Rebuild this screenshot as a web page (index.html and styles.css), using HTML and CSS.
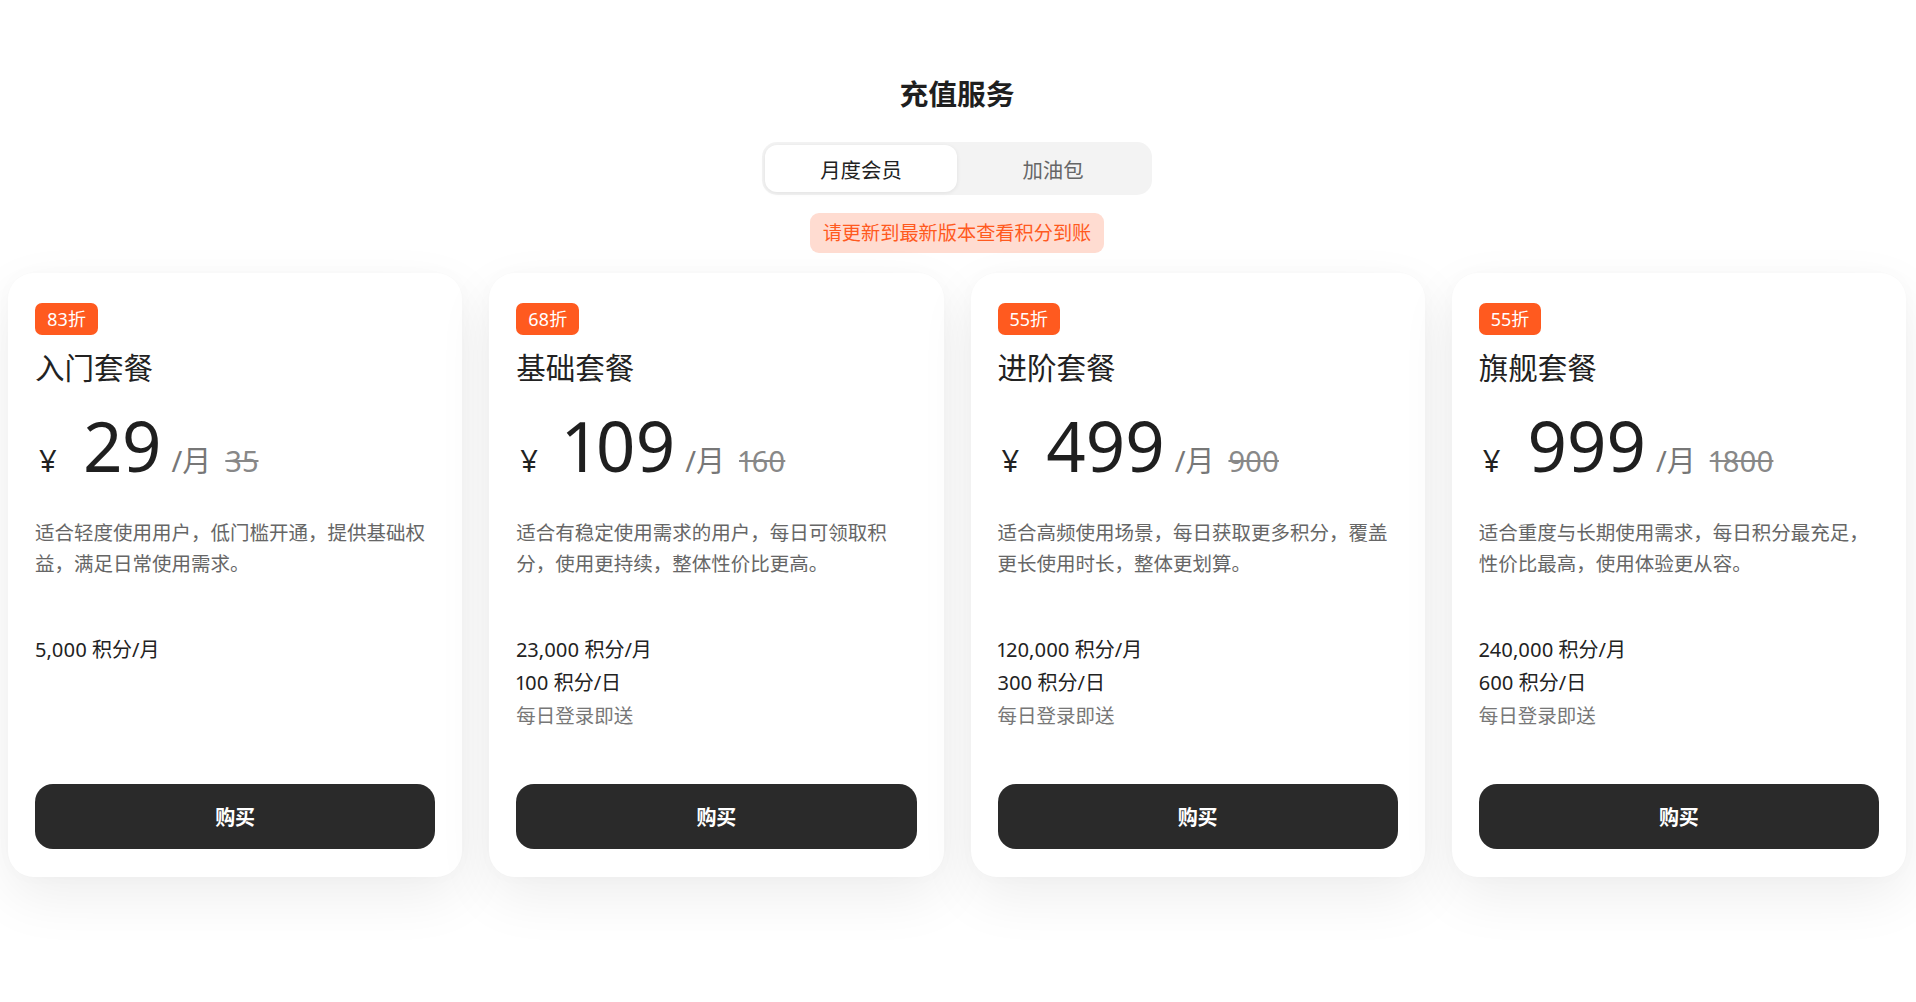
FILE: index.html
```html
<!DOCTYPE html>
<html lang="zh-CN">
<head>
    <meta charset="UTF-8">
    <meta name="viewport" content="width=device-width, initial-scale=1.0">
    <title>充值服务</title>
    <link rel="stylesheet" href="styles.css">
</head>
<body>
    <div class="page">
        <h1 class="page-title">充值服务</h1>

        <div class="tabs">
            <button class="tab active">月度会员</button>
            <button class="tab">加油包</button>
        </div>

        <div class="notice">请更新到最新版本查看积分到账</div>

        <div class="plans">
            <div class="plan">
                <span class="badge">83折</span>
                <div class="plan-name">入门套餐</div>
                <div class="price">
                    <span class="currency">¥</span>
                    <span class="amount">29</span>
                    <span class="unit">/月</span>
                    <span class="old-price">35</span>
                </div>
                <p class="desc">适合轻度使用用户，低门槛开通，提供基础权益，满足日常使用需求。</p>
                <ul class="features">
                    <li>5,000 积分/月</li>
                </ul>
                <button class="buy">购买</button>
            </div>

            <div class="plan">
                <span class="badge">68折</span>
                <div class="plan-name">基础套餐</div>
                <div class="price">
                    <span class="currency">¥</span>
                    <span class="amount">109</span>
                    <span class="unit">/月</span>
                    <span class="old-price">160</span>
                </div>
                <p class="desc">适合有稳定使用需求的用户，每日可领取积分，使用更持续，整体性价比更高。</p>
                <ul class="features">
                    <li>23,000 积分/月</li>
                    <li>100 积分/日</li>
                    <li class="note">每日登录即送</li>
                </ul>
                <button class="buy">购买</button>
            </div>

            <div class="plan">
                <span class="badge">55折</span>
                <div class="plan-name">进阶套餐</div>
                <div class="price">
                    <span class="currency">¥</span>
                    <span class="amount">499</span>
                    <span class="unit">/月</span>
                    <span class="old-price">900</span>
                </div>
                <p class="desc">适合高频使用场景，每日获取更多积分，覆盖更长使用时长，整体更划算。</p>
                <ul class="features">
                    <li>120,000 积分/月</li>
                    <li>300 积分/日</li>
                    <li class="note">每日登录即送</li>
                </ul>
                <button class="buy">购买</button>
            </div>

            <div class="plan">
                <span class="badge">55折</span>
                <div class="plan-name">旗舰套餐</div>
                <div class="price">
                    <span class="currency">¥</span>
                    <span class="amount">999</span>
                    <span class="unit">/月</span>
                    <span class="old-price">1800</span>
                </div>
                <p class="desc">适合重度与长期使用需求，每日积分最充足，性价比最高，使用体验更从容。</p>
                <ul class="features">
                    <li>240,000 积分/月</li>
                    <li>600 积分/日</li>
                    <li class="note">每日登录即送</li>
                </ul>
                <button class="buy">购买</button>
            </div>
        </div>
    </div>
</body>
</html>
```

FILE: styles.css
```css
body {
    margin: 0;
    background: #fff;
    color: #222;
    font-family: "Noto Sans", "Noto Sans CJK SC", sans-serif;
    font-variant-numeric: proportional-nums;
}
.page {
    display: flex;
    flex-direction: column;
    align-items: center;
    box-sizing: border-box;
    min-height: 100vh;
    padding: 0 10px 0 8px;
}
.page-title {
    margin: 74px 0 0;
    font-size: 28.8px;
    line-height: 40px;
    font-weight: 700;
    color: #1f1f1f;
}
.tabs {
    display: flex;
    margin-top: 28px;
    padding: 3px;
    background: #f3f3f3;
    border-radius: 15px;
}
.tab {
    width: 192px;
    height: 47px;
    border: none;
    background: transparent;
    border-radius: 12px;
    font-family: inherit;
    font-size: 20.4px;
    color: #666;
    cursor: pointer;
}
.tab.active {
    background: #fff;
    color: #222;
    box-shadow: 0 1px 4px rgba(0, 0, 0, 0.08);
}
.notice {
    margin-top: 18px;
    height: 40px;
    line-height: 40px;
    padding: 0 13px;
    background: #ffdcd1;
    color: #ff5a1f;
    border-radius: 9px;
    font-size: 19.2px;
}
.plans {
    align-self: stretch;
    display: grid;
    grid-template-columns: repeat(4, 1fr);
    gap: 27px;
    margin-top: 20px;
}
.plan {
    display: flex;
    flex-direction: column;
    align-items: flex-start;
    padding: 30px 27px 28px;
    background: #fff;
    border-radius: 26px;
    box-shadow: 0 20px 56px rgba(0, 0, 0, 0.07), 0 0 18px rgba(0, 0, 0, 0.02);
}
.badge {
    height: 32px;
    line-height: 32px;
    padding: 0 12px;
    background: #ff5a1f;
    color: #fff;
    border-radius: 7px;
    font-size: 18px;
}
.plan-name {
    margin-top: 13px;
    font-size: 29.5px;
    line-height: 40px;
    color: #222;
}
.price {
    display: flex;
    align-items: baseline;
    margin-top: 19px;
    height: 76px;
    line-height: 76px;
}
.currency {
    font-size: 31px;
    margin: 0 27px 0 4px;
}
.amount {
    font-size: 69px;
    color: #1f1f1f;
}
.unit {
    margin-left: 10px;
    font-size: 29px;
    color: #777;
}
.old-price {
    margin-left: 14px;
    font-size: 29px;
    color: #888;
    text-decoration: line-through;
}
.desc {
    margin: 34px 0 0;
    min-height: 62px;
    font-size: 19.5px;
    line-height: 31px;
    color: #666;
}
.features {
    list-style: none;
    margin: 54px 0 52px;
    padding: 0;
    font-size: 20px;
    line-height: 33px;
    color: #222;
}
.features .note {
    font-size: 19.5px;
    color: #777;
}
.buy {
    align-self: stretch;
    margin-top: auto;
    height: 65px;
    border: none;
    border-radius: 18px;
    background: #2a2a2a;
    color: #fff;
    font-family: inherit;
    font-size: 20px;
    font-weight: 700;
    cursor: pointer;
}
```
